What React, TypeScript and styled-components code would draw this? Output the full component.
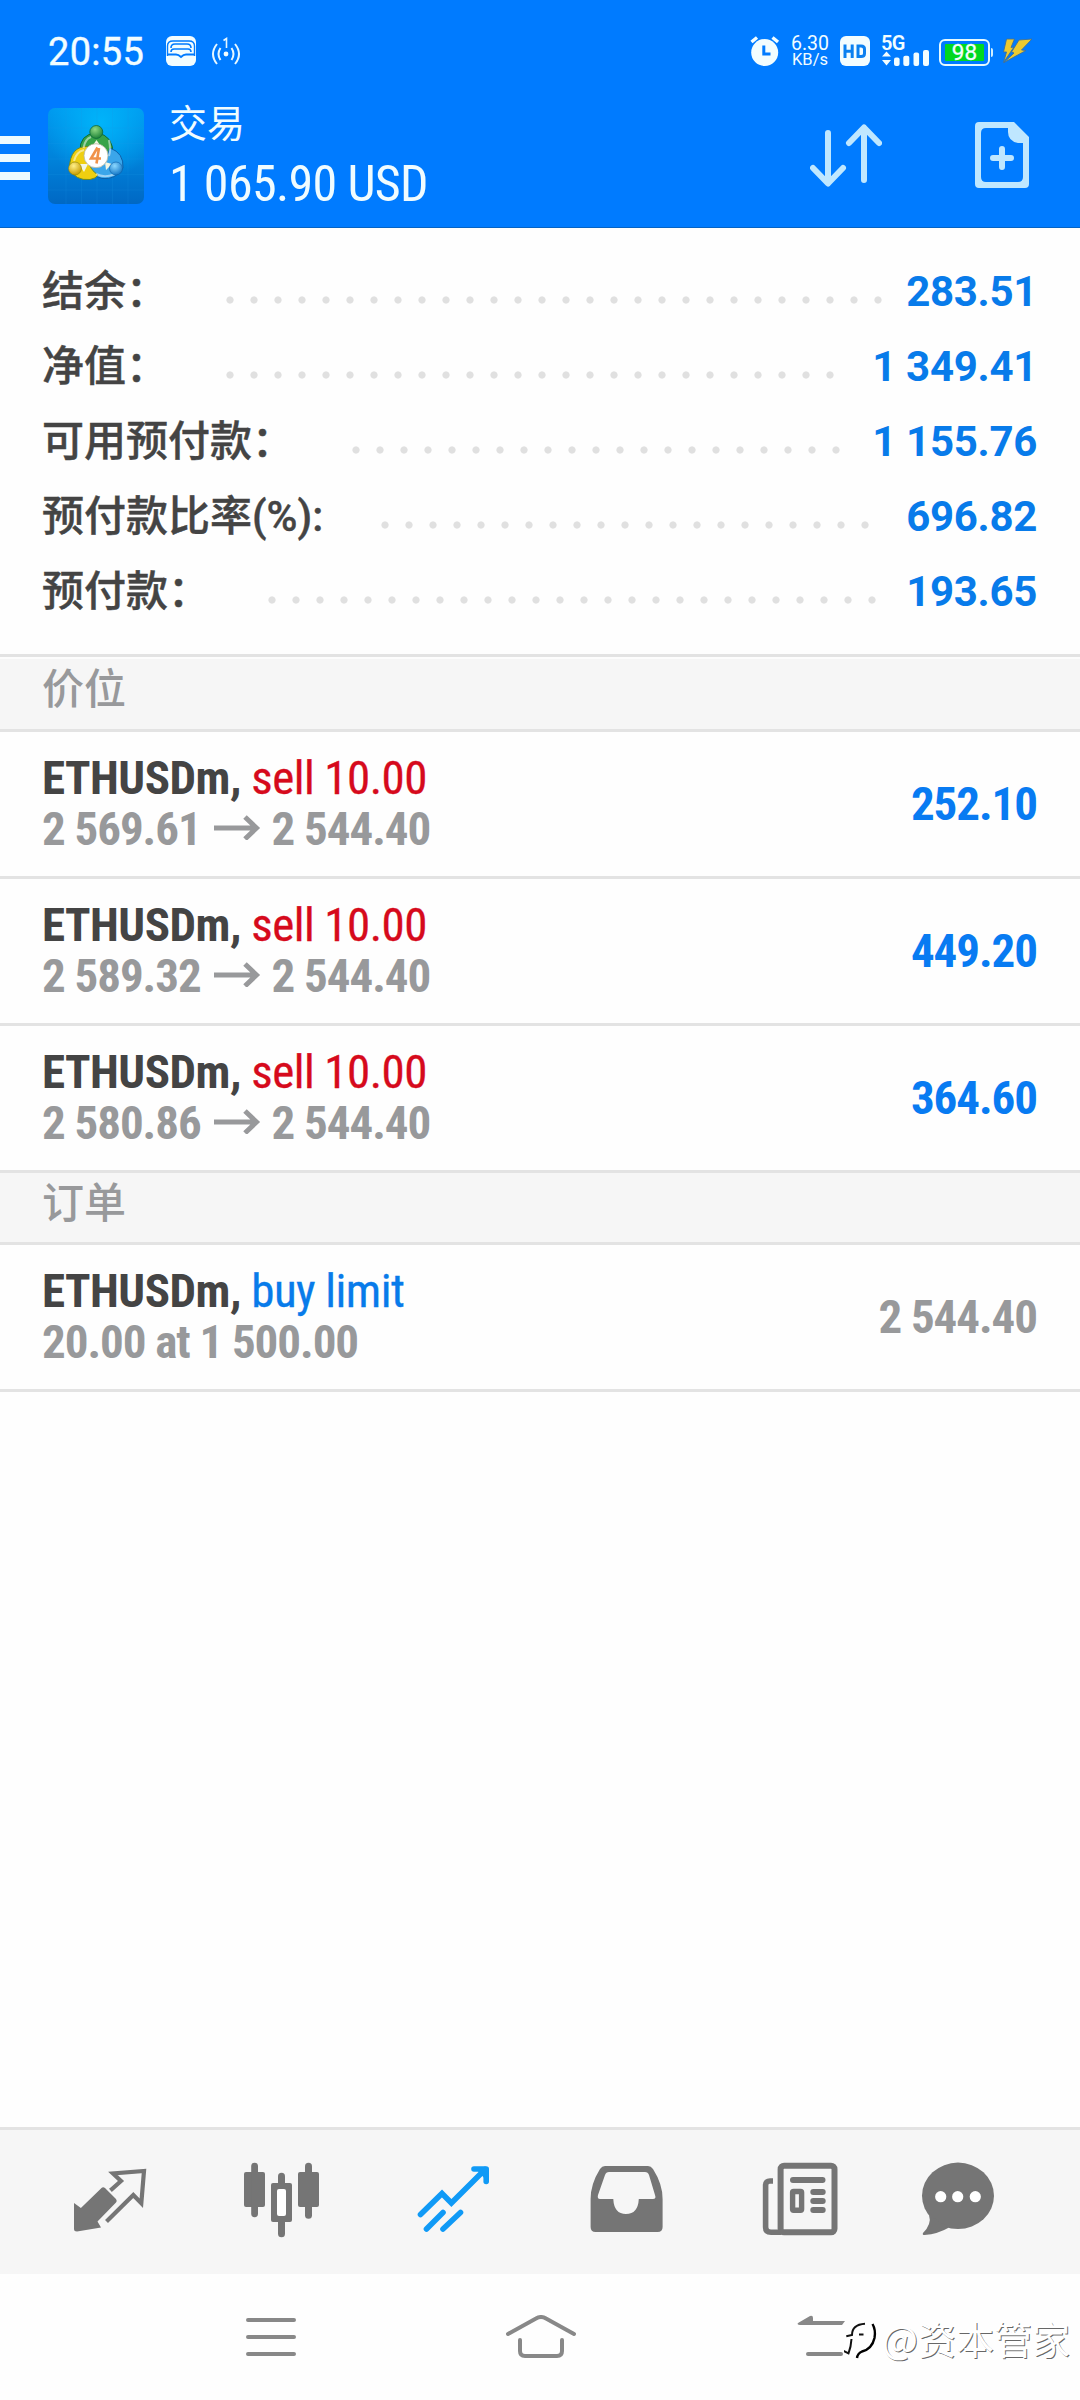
import React from "react";
import styled, { createGlobalStyle } from "styled-components";

const CJK = `"Noto Sans CJK SC", sans-serif`;
const CONDENSED = `"Roboto Condensed", Roboto, ${CJK}`;

const GlobalStyle = createGlobalStyle`
  *, *::before, *::after { box-sizing: border-box; }
  body { margin: 0; background: #fff; }
  svg { display: block; flex: none; }
`;

const Screen = styled.div`
  position: relative;
  width: 1080px;
  height: 2400px;
  display: flex;
  flex-direction: column;
  overflow: hidden;
  background: #fefefe;
  font-family: Roboto, ${CJK};
`;

const Header = styled.header`
  height: 228px;
  flex: none;
  display: flex;
  flex-direction: column;
  background: #007bff;
  border-bottom: 1px solid #0563c4;
`;

const StatusBar = styled.div`
  height: 102px;
  padding: 0 48px;
  display: flex;
  align-items: center;
  justify-content: space-between;
  color: #f2fdff;
`;

const StatusGroup = styled.div`
  display: flex;
  align-items: center;
`;

const Clock = styled.span`
  width: 118px;
  padding-top: 2px;
  font-size: 38px;
  line-height: 44px;
  letter-spacing: 0.3px;
  -webkit-text-stroke: 0.4px #f2fdff;
`;

const HotspotSlot = styled.span`
  margin-left: 15px;
`;

const NetSpeed = styled.div`
  width: 38px;
  margin: 0 11px;
  display: flex;
  flex-direction: column;
  align-items: center;
`;

const SpeedValue = styled.span`
  font-size: 19.5px;
  line-height: 16px;
`;

const SpeedUnit = styled.span`
  font-size: 16.5px;
  line-height: 15px;
`;

const TitleBar = styled.div`
  flex: 1;
  display: flex;
  align-items: flex-start;
`;

const MenuButton = styled.div`
  width: 30px;
  margin: 34px 18px 0 0;
  display: flex;
  flex-direction: column;
  gap: 10px;
`;

const MenuLine = styled.span`
  height: 8px;
  background: #ecfaff;
`;

const LogoBox = styled.div`
  margin: 6px 25px 0 0;
`;

const TitleText = styled.div`
  flex: 1;
  display: flex;
  flex-direction: column;
  color: #f0fcff;
`;

const Title = styled.span`
  margin-top: -2px;
  font: 400 38px/42px ${CJK};
`;

const Total = styled.span`
  margin-top: 12px;
  font: 400 50px/60px ${CONDENSED};
  letter-spacing: -0.65px;
`;

const HeaderActions = styled.div`
  display: flex;
  gap: 93px;
  padding: 20px 51px 0 0;
`;

const Summary = styled.section`
  height: 426px;
  flex: none;
  padding: 26px 43px 0 42px;
`;

const SummaryRow = styled.div`
  height: 75px;
  display: flex;
  align-items: center;
`;

const SummaryLabel = styled.span`
  flex: none;
  font: 500 42px/60px Roboto, ${CJK};
  color: #444;
  -webkit-text-stroke: 0.4px #444;
`;

const Leader = styled.div`
  flex: 1;
  height: 8px;
  margin: 16px 10px 0 50px;
  display: flex;
  flex-wrap: wrap;
  overflow: hidden;
`;

const Dot = styled.span`
  width: 24px;
  height: 8px;
  flex: none;
  background: radial-gradient(circle, #e0e0e0 3.2px, transparent 4px);
`;

const SummaryValue = styled.span`
  flex: none;
  font: 700 42px/60px Roboto, sans-serif;
  letter-spacing: -0.3px;
  color: #087bea;
`;

const SectionTitle = styled.h2<{ $first?: boolean }>`
  height: ${(p) => (p.$first ? 78 : 72)}px;
  flex: none;
  margin: 0;
  padding: 0 42px ${(p) => (p.$first ? 13 : 12)}px;
  display: flex;
  align-items: flex-end;
  background: #f6f6f6;
  border-top: ${(p) => (p.$first ? 3 : 0)}px solid #e3e3e3;
  border-bottom: 3px solid #e3e3e3;
  box-shadow: ${(p) => (p.$first ? "inset 0 2px #fdfdfd" : "none")};
  font: 500 42px/60px ${CJK};
  color: #98999b;
`;

const TradeRow = styled.div`
  height: 147px;
  flex: none;
  padding: 0 43px 2px 42px;
  display: flex;
  align-items: center;
  justify-content: space-between;
  border-bottom: 3px solid #e3e3e3;
  font: 700 47px/51px ${CONDENSED};
  letter-spacing: -1.05px;
`;

const TradeInfo = styled.div`
  display: flex;
  flex-direction: column;
`;

const TradeLine = styled.div`
  display: flex;
  align-items: center;
  white-space: pre;
`;

const Ticker = styled.span`
  letter-spacing: -0.5px;
  color: #444;
`;

const Side = styled.span<{ $buy?: boolean }>`
  font-weight: 400;
  letter-spacing: -0.55px;
  color: ${(p) => (p.$buy ? "#087bea" : "#d60a1c")};
  -webkit-text-stroke: 0.3px currentColor;
`;

const Price = styled.span`
  color: #98999b;
`;

const ArrowBox = styled.span`
  padding: 0 11px 3px 13px;
`;

const Result = styled.span<{ $muted?: boolean }>`
  color: ${(p) => (p.$muted ? "#98999b" : "#087bf2")};
`;

const Spacer = styled.div`
  flex: 1;
`;

const TabBar = styled.nav`
  height: 147px;
  flex: none;
  padding: 0 24px;
  display: grid;
  grid-template-columns: repeat(6, 1fr);
  place-items: center;
  background: #f6f6f6;
  border-top: 3px solid #e3e3e3;
  color: #757575;
`;

const ChatSlot = styled.div`
  padding-right: 24px;
`;

const SystemNav = styled.nav`
  height: 126px;
  flex: none;
  padding: 0 134px 0 136px;
  display: grid;
  grid-template-columns: repeat(3, 1fr);
  place-items: center;
`;

const Watermark = styled.div`
  position: absolute;
  right: 10px;
  bottom: 34px;
  display: flex;
  align-items: center;
  font: 400 38px/56px ${CJK};
  color: #fff;
  text-shadow: 1px 1px 0.5px rgba(0, 0, 0, 0.6);
`;

const SignalBox = styled.div`
  width: 49px;
  height: 30px;
  margin: 0 9px 0 11px;
  position: relative;
`;

const SignalLabel = styled.span`
  position: absolute;
  left: 0;
  top: 0;
  font-size: 20px;
  line-height: 15px;
  font-weight: 600;
  letter-spacing: -0.8px;
`;

const Battery = styled.div`
  position: relative;
  width: 51px;
  height: 27px;
  margin: 2px 12px 0 0;
  padding: 3px 4px;
  display: flex;
  border: 2px solid #e6faff;
  border-radius: 6px;

  &::after {
    content: "";
    position: absolute;
    left: 50px;
    top: 7px;
    width: 2px;
    height: 9px;
    border-radius: 0 2px 2px 0;
    background: #cfefff;
  }
`;

const BatteryFill = styled.div`
  flex: 1;
  display: flex;
  align-items: center;
  justify-content: center;
  border-radius: 1px;
  background: #00d820;
  font-size: 22.5px;
  line-height: 17px;
  font-weight: 400;
  -webkit-text-stroke: 0.3px #f2fdff;
`;

const MessageIcon = () => (
  <svg width="30" height="30" viewBox="0 0 30 30">
    <rect width="30" height="30" rx="6" fill="#f2fdff" />
    <path d="M1.500 20V10Q1.500 5 7 5H23Q28.500 5 28.500 10V20" fill="none" stroke="#007bff" strokeWidth="1.400" />
    <path d="M5 12Q5 8 9 8H21Q25 8 25 12M5 16Q5 13 8 13H22Q25 13 25 16" fill="none" stroke="#007bff" strokeWidth="1.600" />
    <path d="M1 18.500H10Q12.500 18.500 15 21Q17.500 18.500 20 18.500H29" fill="none" stroke="#007bff" strokeWidth="1.800" />
  </svg>
);

const HotspotIcon = () => (
  <svg width="30" height="30" viewBox="0 0 30 30" fill="none" stroke="#e6f7ff" strokeWidth="2">
    <path d="M6 8Q-2 18 6 28M9.500 12Q5.500 18 9.500 24M24 8Q32 18 24 28M20.500 12Q24.500 18 20.500 24" />
    <path d="M12.500 4.500L15.500 2.500V12" strokeWidth="1.600" />
    <circle cx="15" cy="18" r="2.400" fill="#f2fdff" stroke="none" />
  </svg>
);

const AlarmIcon = () => (
  <svg width="30" height="30" viewBox="0 0 30 30">
    <circle cx="14.700" cy="16.500" r="13.500" fill="#f2fdff" />
    <path d="M1.500 6L7 1.500M28 6L22.500 1.500" stroke="#f2fdff" strokeWidth="3.400" />
    <path d="M13.800 9.500V18H20.500" fill="none" stroke="#007bff" strokeWidth="3" />
  </svg>
);

const HdIcon = () => (
  <svg width="30" height="30" viewBox="0 0 30 30">
    <rect width="30" height="30" rx="6" fill="#f2fdff" />
    <path d="M5 8.500V22M12.200 8.500V22M5 15.200H12.200M18 10V20.500H21Q24.500 20.500 24.500 17.500V13Q24.500 10 21 10Z" fill="none" stroke="#0a80f0" strokeWidth="3" />
  </svg>
);

const SignalIcon = () => (
  <svg width="49" height="30" viewBox="0 0 49 30" fill="#f2fdff">
    <path d="M5.500 15.500L10 20.500H1ZM5.500 29.500L10 24H1Z" />
    <rect x="13" y="21.500" width="5.600" height="8.500" rx="2" />
    <rect x="22.300" y="19.700" width="6" height="10.300" rx="2" />
    <rect x="32.500" y="16.500" width="5.600" height="13.500" rx="2" />
    <rect x="42" y="14" width="6" height="16" rx="2" />
  </svg>
);

const BoltIcon = () => (
  <svg width="30" height="26" viewBox="0 0 30 26" fill="#ecca30">
    <path d="M4.500 1H12.500L9 9.500L12 9L1.500 24.500L4.500 14H1.500ZM17 2L30 1L19.500 12L24 12.500L2 24.500L12 15L9.500 14Z" stroke="#3c6f9c" strokeWidth="0.900" />
  </svg>
);

const AppLogo = () => (
  <svg width="96" height="96" viewBox="0 0 96 96">
    <defs>
      <linearGradient id="tile" x1="0" y1="0" x2="0" y2="1">
        <stop offset="0" stopColor="#0098ee" />
        <stop offset="0.5" stopColor="#0084dc" />
        <stop offset="1" stopColor="#0068c4" />
      </linearGradient>
      <radialGradient id="glow" cx="0.550" cy="0.150" r="0.600">
        <stop offset="0" stopColor="#00b4fa" />
        <stop offset="1" stopColor="#00b4fa" stopOpacity="0" />
      </radialGradient>
      <radialGradient id="green" cx="0.400" cy="0.300" r="0.700">
        <stop offset="0" stopColor="#8fd884" />
        <stop offset="1" stopColor="#1e8438" />
      </radialGradient>
      <radialGradient id="yellow" cx="0.400" cy="0.300" r="0.700">
        <stop offset="0" stopColor="#fff08a" />
        <stop offset="1" stopColor="#c89c00" />
      </radialGradient>
      <radialGradient id="blue" cx="0.400" cy="0.300" r="0.700">
        <stop offset="0" stopColor="#8cd8ff" />
        <stop offset="1" stopColor="#1478c8" />
      </radialGradient>
    </defs>
    <rect width="96" height="96" rx="7" fill="url(#tile)" />
    <rect width="96" height="96" rx="7" fill="url(#glow)" />
    <path d="M18 0V96M33.500 0V96M49 0V96M64.500 0V96M80 0V96M0 20H96M0 35.500H96M0 51H96M0 66.500H96M0 82H96" stroke="#1c9ae8" strokeWidth="0.500" opacity="0.350" />
    <path d="M32 44Q31 26 48.500 25Q66 27 65 48Q64 56 60 60L40 50Z" fill="#37a348" stroke="#0f6a3c" strokeWidth="1" />
    <path d="M62 40Q76 45 75 60Q68 72 54 70.500Q44 68 38 58L58 50Z" fill="#3ba6ea" stroke="#0c5fa8" strokeWidth="1" />
    <path d="M40 38.500Q22 38 21.500 60Q27 73 42 71.500Q48 70.500 50 67Q42 62 40 52Z" fill="#efcf10" stroke="#6f8a20" strokeWidth="1" />
    <path d="M48.500 32L54 40H43ZM31 56L40 56L36 64ZM58 62L57 54L64 56Z" fill="#f2f6e4" />
    <path d="M35.500 40Q37 31 43 29M26 53Q28 44 36 42M48 66Q56 70 66 66.500M61 32Q63 42 61 48" fill="none" stroke="#fff" strokeOpacity="0.500" strokeWidth="2" />
    <circle cx="48.300" cy="24" r="6.500" fill="url(#green)" stroke="#0f6a3c" strokeWidth="0.800" />
    <circle cx="27" cy="60.500" r="6.500" fill="url(#yellow)" stroke="#8a8410" strokeWidth="0.600" />
    <circle cx="68" cy="60.500" r="6.500" fill="url(#blue)" stroke="#0c5fa8" strokeWidth="0.600" />
    <circle cx="48" cy="47.700" r="12" fill="#fff" stroke="#b8b8a0" strokeWidth="0.800" />
    <path d="M49.500 39.500L43 50.500H53M51 40L48.500 55.500" fill="none" stroke="#f0924a" strokeWidth="2.600" />
  </svg>
);

const SortIcon = () => (
  <svg width="72" height="66" viewBox="0 0 72 66" fill="none" stroke="#bfe7ff" strokeWidth="6" strokeLinecap="round" strokeLinejoin="round">
    <path d="M18 11V61M3 46L18 61.500L33 46M54 58V7M39 21L54 5.500L69 21" />
  </svg>
);

const NewOrderIcon = () => (
  <svg width="54" height="66" viewBox="0 0 54 66">
    <path fillRule="evenodd" d="M4 0H39L54 15V62Q54 66 50 66H4Q0 66 0 62V4Q0 0 4 0ZM11 6Q6 6 6 11V55Q6 60 11 60H43Q48 60 48 55V21H43Q33 19 33 10V6Z" fill="#bfe7ff" />
    <path d="M27 27V45M18 36H36" stroke="#bfe7ff" strokeWidth="6" strokeLinecap="round" />
  </svg>
);

const PriceArrow = () => (
  <svg width="47" height="26" viewBox="0 0 47 26" fill="none" stroke="#98999b" strokeWidth="5">
    <path d="M0 14H43M31 3L42.500 14L31 25" />
  </svg>
);

const QuotesIcon = () => (
  <svg width="96" height="96" viewBox="0 0 96 96">
    <path d="M50 35L59 27L51 19.500L82 17L79.300 49.300L71.300 41L46 66" fill="none" stroke="currentColor" strokeWidth="4.200" strokeLinecap="square" />
    <path d="M43 34L54 45Q55.500 47 54 48.500L35.500 67.500L39 73.500L15 77.500Q12 77.500 12 75V49L18.900 54L39.500 34Q41 32.500 43 34Z" fill="currentColor" />
  </svg>
);

const ChartIcon = () => (
  <svg width="96" height="96" viewBox="0 0 96 96" fill="currentColor">
    <rect x="10" y="18" width="21" height="35" rx="2" />
    <rect x="17.200" y="8.700" width="6.800" height="54.500" rx="3.400" />
    <rect x="44" y="18.700" width="7" height="64.500" rx="3.500" />
    <rect x="37" y="29" width="21" height="39" rx="2" />
    <rect x="43" y="35" width="9" height="27" rx="2" fill="#fff" />
    <rect x="64" y="18" width="21" height="35" rx="2" />
    <rect x="71" y="8.700" width="7" height="56" rx="3.500" />
  </svg>
);

const TradeIcon = () => (
  <svg width="96" height="96" viewBox="0 0 96 96" fill="none" stroke="#109af6" strokeWidth="5.600" strokeLinecap="round">
    <path d="M14.500 60.500L36 39.500L45.400 49L79 15.500M20.500 75L37 58.500M37 75L54.500 58.500" />
    <path d="M68 15H80.200V27.500" strokeLinejoin="round" />
    <path d="M70 15H80V26Z" fill="#109af6" stroke="none" />
  </svg>
);

const HistoryIcon = () => (
  <svg width="96" height="96" viewBox="0 0 96 96">
    <path fillRule="evenodd" fill="currentColor" d="M27 12H70Q73 12 75 15Q84.600 30 84.600 45V73Q84.600 78 79.600 78H17.600Q12.600 78 12.600 73V45Q12.600 30 22 15Q24 12 27 12ZM31 18Q28 18 27 21L20 41Q19 45 22 45H35.300Q36 60 48 60Q60 60 60.800 45H75Q78.500 45 77 41L71 21Q70 18 67 18Z" />
  </svg>
);

const NewsIcon = () => (
  <svg width="96" height="96" viewBox="0 0 96 96" fill="none" stroke="currentColor" strokeWidth="6">
    <rect x="30.600" y="11.700" width="53.900" height="66.600" rx="3.500" />
    <path d="M23 27H20Q15.600 27 15.600 31V73Q15.600 78.300 21 78.300H31" strokeWidth="5.600" />
    <path d="M43 26H72.500M63.300 38H72.700M63.300 47H72.700M63.300 56H72.700" strokeLinecap="round" />
    <rect x="42.600" y="37.500" width="9" height="18.700" rx="1" strokeWidth="5.400" />
  </svg>
);

const ChatIcon = () => (
  <svg width="96" height="96" viewBox="0 0 96 96" fill="currentColor">
    <ellipse cx="48" cy="41.800" rx="36" ry="33.200" />
    <path d="M19 61Q22 70 13 79Q12 81 14.500 81Q28 80 39 73.500Z" />
    <circle cx="30.700" cy="42.700" r="5.600" fill="#fff" />
    <circle cx="47.700" cy="42.700" r="5.600" fill="#fff" />
    <circle cx="65.300" cy="42.700" r="5.600" fill="#fff" />
  </svg>
);

const RecentsIcon = () => (
  <svg width="50" height="44" viewBox="0 0 50 44" fill="none" stroke="#888" strokeWidth="4" strokeLinecap="round">
    <path d="M2 5H48M2 22H48M2 39H48" />
  </svg>
);

const HomeIcon = () => (
  <svg width="72" height="44" viewBox="0 0 72 44" fill="none" stroke="#888" strokeWidth="4" strokeLinecap="round">
    <path d="M3 19L31 3.500Q36 0.500 41 3.500L69 19M15 25V36Q15 41 20 41H52Q57 41 57 36V25" strokeLinejoin="round" />
  </svg>
);

const BackIcon = () => (
  <svg width="100" height="44" viewBox="0 0 100 44">
    <path d="M37 8L49 1Q52 0 52 3V6H84L81 10H39Q35.500 9.500 37 8Z" fill="#888" />
    <path d="M47 39H80" stroke="#888" strokeWidth="4" strokeLinecap="round" />
  </svg>
);

const WatermarkLogo = () => (
  <svg width="38" height="44" viewBox="0 0 38 44" fill="none">
    <path d="M0 20L6 17L10 6L29 6L31 20L26 34L12 41L4 38L-2 34Z" fill="#fff" />
    <path d="M2.300 20.300L8 19Q8 8.500 21 7.700M15 18.500H19.500M7.500 23Q7 31 4.500 37.300L-1 34.500" stroke="#111" strokeWidth="2" />
    <path d="M28.500 8Q32 14 30.500 22Q28 33 18 35.500Q13.500 37.500 13 42" stroke="#000" strokeWidth="2.400" />
  </svg>
);

const summary = [
  { label: "结余：", value: "283.51" },
  { label: "净值：", value: "1 349.41" },
  { label: "可用预付款：", value: "1 155.76" },
  { label: "预付款比率(%):", value: "696.82" },
  { label: "预付款：", value: "193.65" },
];

const positions = [
  { open: "2 569.61", current: "2 544.40", profit: "252.10" },
  { open: "2 589.32", current: "2 544.40", profit: "449.20" },
  { open: "2 580.86", current: "2 544.40", profit: "364.60" },
];

const dots = Array.from({ length: 32 }, (_, i) => i);

export default function App() {
  return (
    <Screen>
      <GlobalStyle />
      <Header>
        <StatusBar>
          <StatusGroup>
            <Clock>20:55</Clock>
            <MessageIcon />
            <HotspotSlot>
              <HotspotIcon />
            </HotspotSlot>
          </StatusGroup>
          <StatusGroup>
            <AlarmIcon />
            <NetSpeed>
              <SpeedValue>6.30</SpeedValue>
              <SpeedUnit>KB/s</SpeedUnit>
            </NetSpeed>
            <HdIcon />
            <SignalBox>
              <SignalLabel>5G</SignalLabel>
              <SignalIcon />
            </SignalBox>
            <Battery>
              <BatteryFill>98</BatteryFill>
            </Battery>
            <BoltIcon />
          </StatusGroup>
        </StatusBar>
        <TitleBar>
          <MenuButton>
            <MenuLine />
            <MenuLine />
            <MenuLine />
          </MenuButton>
          <LogoBox>
            <AppLogo />
          </LogoBox>
          <TitleText>
            <Title>交易</Title>
            <Total>1 065.90 USD</Total>
          </TitleText>
          <HeaderActions>
            <SortIcon />
            <NewOrderIcon />
          </HeaderActions>
        </TitleBar>
      </Header>

      <Summary>
        {summary.map((row) => (
          <SummaryRow key={row.label}>
            <SummaryLabel>{row.label}</SummaryLabel>
            <Leader>
              {dots.map((i) => (
                <Dot key={i} />
              ))}
            </Leader>
            <SummaryValue>{row.value}</SummaryValue>
          </SummaryRow>
        ))}
      </Summary>

      <SectionTitle $first>价位</SectionTitle>
      {positions.map((p) => (
        <TradeRow key={p.open}>
          <TradeInfo>
            <TradeLine>
              <Ticker>ETHUSDm, </Ticker>
              <Side>sell 10.00</Side>
            </TradeLine>
            <TradeLine>
              <Price>{p.open}</Price>
              <ArrowBox>
                <PriceArrow />
              </ArrowBox>
              <Price>{p.current}</Price>
            </TradeLine>
          </TradeInfo>
          <Result>{p.profit}</Result>
        </TradeRow>
      ))}

      <SectionTitle>订单</SectionTitle>
      <TradeRow>
        <TradeInfo>
          <TradeLine>
            <Ticker>ETHUSDm, </Ticker>
            <Side $buy>buy limit</Side>
          </TradeLine>
          <TradeLine>
            <Price>20.00 at 1 500.00</Price>
          </TradeLine>
        </TradeInfo>
        <Result $muted>2 544.40</Result>
      </TradeRow>

      <Spacer />

      <TabBar>
        <QuotesIcon />
        <ChartIcon />
        <TradeIcon />
        <HistoryIcon />
        <NewsIcon />
        <ChatSlot>
          <ChatIcon />
        </ChatSlot>
      </TabBar>
      <SystemNav>
        <RecentsIcon />
        <HomeIcon />
        <BackIcon />
      </SystemNav>
      <Watermark>
        <WatermarkLogo />
        @资本管家
      </Watermark>
    </Screen>
  );
}
